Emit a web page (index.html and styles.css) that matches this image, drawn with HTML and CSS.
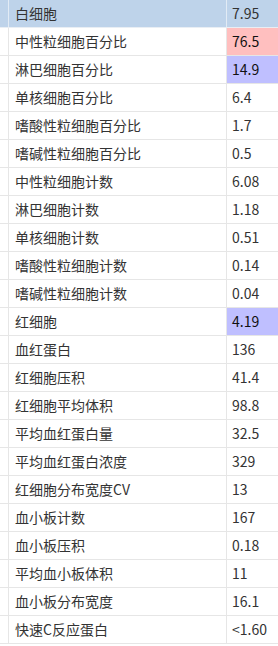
FILE: index.html
```html
<!DOCTYPE html>
<html lang="zh-CN">
<head>
<meta charset="utf-8">
<title>血常规</title>
<link rel="stylesheet" href="styles.css">
</head>
<body>
<div class="table">
  <div class="row head"><div class="gutter"></div><div class="name">白细胞</div><div class="val">7.95</div></div>
  <div class="row"><div class="gutter"></div><div class="name">中性粒细胞百分比</div><div class="val high">76.5</div></div>
  <div class="row"><div class="gutter"></div><div class="name">淋巴细胞百分比</div><div class="val low">14.9</div></div>
  <div class="row"><div class="gutter"></div><div class="name">单核细胞百分比</div><div class="val">6.4</div></div>
  <div class="row"><div class="gutter"></div><div class="name">嗜酸性粒细胞百分比</div><div class="val">1.7</div></div>
  <div class="row"><div class="gutter"></div><div class="name">嗜碱性粒细胞百分比</div><div class="val">0.5</div></div>
  <div class="row"><div class="gutter"></div><div class="name">中性粒细胞计数</div><div class="val">6.08</div></div>
  <div class="row"><div class="gutter"></div><div class="name">淋巴细胞计数</div><div class="val">1.18</div></div>
  <div class="row"><div class="gutter"></div><div class="name">单核细胞计数</div><div class="val">0.51</div></div>
  <div class="row"><div class="gutter"></div><div class="name">嗜酸性粒细胞计数</div><div class="val">0.14</div></div>
  <div class="row"><div class="gutter"></div><div class="name">嗜碱性粒细胞计数</div><div class="val">0.04</div></div>
  <div class="row"><div class="gutter"></div><div class="name">红细胞</div><div class="val low">4.19</div></div>
  <div class="row"><div class="gutter"></div><div class="name">血红蛋白</div><div class="val">136</div></div>
  <div class="row"><div class="gutter"></div><div class="name">红细胞压积</div><div class="val">41.4</div></div>
  <div class="row"><div class="gutter"></div><div class="name">红细胞平均体积</div><div class="val">98.8</div></div>
  <div class="row"><div class="gutter"></div><div class="name">平均血红蛋白量</div><div class="val">32.5</div></div>
  <div class="row"><div class="gutter"></div><div class="name">平均血红蛋白浓度</div><div class="val">329</div></div>
  <div class="row"><div class="gutter"></div><div class="name">红细胞分布宽度CV</div><div class="val">13</div></div>
  <div class="row"><div class="gutter"></div><div class="name">血小板计数</div><div class="val">167</div></div>
  <div class="row"><div class="gutter"></div><div class="name">血小板压积</div><div class="val">0.18</div></div>
  <div class="row"><div class="gutter"></div><div class="name">平均血小板体积</div><div class="val">11</div></div>
  <div class="row"><div class="gutter"></div><div class="name">血小板分布宽度</div><div class="val">16.1</div></div>
  <div class="row"><div class="gutter"></div><div class="name">快速C反应蛋白</div><div class="val">&lt;1.60</div></div>
</div>
</body>
</html>
```
FILE: styles.css
```css
html, body {
  margin: 0;
  padding: 0;
  background: #ffffff;
}
body {
  font-family: "Noto Sans CJK SC", "Noto Sans", sans-serif;
  font-size: 14px;
  color: #333333;
}
.table {
  width: 278px;
}
.row {
  display: grid;
  grid-template-columns: 8px 218px 52px;
  height: 28px;
  box-sizing: border-box;
  border-bottom: 1px solid #e6e6e6;
}
.row > div {
  height: 27px;
  line-height: 27px;
  white-space: nowrap;
  overflow: hidden;
}
.name, .val {
  border-left: 1px solid #e6e6e6;
}
.name {
  padding-left: 6px;
}
.val {
  padding-left: 5px;
}
.head {
  background: #bed3ea;
  border-bottom-color: #e9eef4;
}
.head .name, .head .val {
  border-left-color: #e2ebf5;
}
.high {
  background: #ffbfbf;
  color: #111111;
}
.low {
  background: #bfbfff;
  color: #111111;
}
```
